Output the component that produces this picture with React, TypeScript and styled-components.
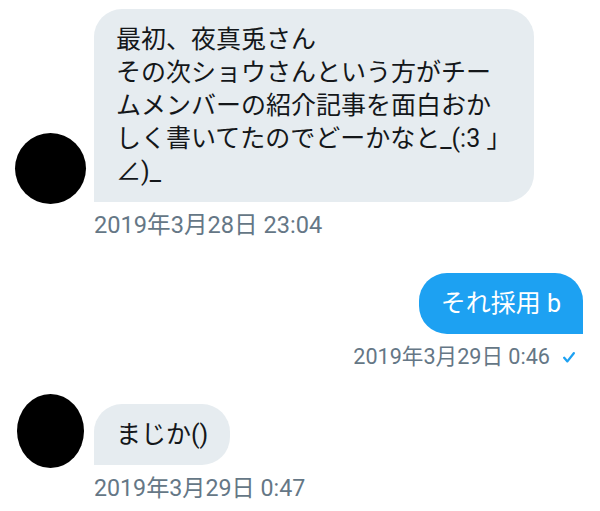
import React from 'react';
import styled, { createGlobalStyle } from 'styled-components';

const GlobalStyle = createGlobalStyle`
  html, body {
    margin: 0;
    padding: 0;
    background: #ffffff;
    font-family: Roboto, "Noto Sans CJK JP", sans-serif;
  }
`;

const Thread = styled.div`
  width: 600px;
  height: 511px;
  box-sizing: border-box;
  padding: 9px 17px 0 15px;
  display: flex;
  flex-direction: column;
  overflow: hidden;
`;

const Incoming = styled.div<{ $gap?: number }>`
  display: grid;
  grid-template-columns: 71px auto;
  column-gap: 8px;
  justify-content: start;
  align-items: start;
  margin-top: ${({ $gap }) => $gap || 0}px;
`;

const Outgoing = styled.div<{ $gap?: number }>`
  display: flex;
  flex-direction: column;
  align-items: flex-end;
  margin-top: ${({ $gap }) => $gap || 0}px;
`;

const Avatar = styled.div<{ $w: number; $h: number; $drop: number }>`
  width: ${({ $w }) => $w}px;
  height: ${({ $h }) => $h}px;
  border-radius: 50%;
  background: #000000;
  align-self: end;
  justify-self: center;
  margin-top: -30px;
  margin-bottom: -${({ $drop }) => $drop}px;
`;

const Bubble = styled.div<{ $out?: boolean; $w?: number }>`
  box-sizing: border-box;
  width: ${({ $w }) => ($w ? `${$w}px` : 'auto')};
  justify-self: start;
  padding: 14px 22px;
  font-size: 25px;
  line-height: 33px;
  color: ${({ $out }) => ($out ? '#ffffff' : '#14171a')};
  background: ${({ $out }) => ($out ? '#1da1f2' : '#e6ecf0')};
  border-radius: ${({ $out }) => ($out ? '28px 28px 0 28px' : '28px 28px 28px 0')};
  white-space: nowrap;
`;

const Meta = styled.div<{ $size?: number; $right?: boolean }>`
  grid-column: 2;
  display: flex;
  align-items: center;
  gap: 13px;
  margin-top: 9px;
  margin-right: ${({ $right }) => ($right ? 8 : 0)}px;
  font-size: ${({ $size }) => $size || 23}px;
  line-height: 28px;
  color: #657786;
`;

const Check = () => (
  <svg width="12" height="11" viewBox="0 0 12 11" fill="none">
    <polyline points="1.2,5.8 4.4,9.4 10.8,1.2" stroke="#1da1f2" strokeWidth="2.3" strokeLinecap="round" strokeLinejoin="round" />
  </svg>
);

export default function App() {
  return (
    <>
      <GlobalStyle />
      <Thread>
        <Incoming>
          <Avatar $w={71} $h={71} $drop={2} />
          <Bubble $w={440}>
            最初、夜真兎さん<br />
            その次ショウさんという方がチー<br />
            ムメンバーの紹介記事を面白おか<br />
            しく書いてたのでどーかなと_(:3 」<br />
            ∠)_
          </Bubble>
          <Meta $size={23.6}>2019年3月28日 23:04</Meta>
        </Incoming>

        <Outgoing $gap={34}>
          <Bubble $out>それ採用 b</Bubble>
          <Meta $right $size={21.6}>
            <span>2019年3月29日 0:46</span>
            <Check />
          </Meta>
        </Outgoing>

        <Incoming $gap={33}>
          <Avatar $w={67} $h={74} $drop={3} />
          <Bubble>まじか()</Bubble>
          <Meta $size={23.2}>2019年3月29日 0:47</Meta>
        </Incoming>
      </Thread>
    </>
  );
}
